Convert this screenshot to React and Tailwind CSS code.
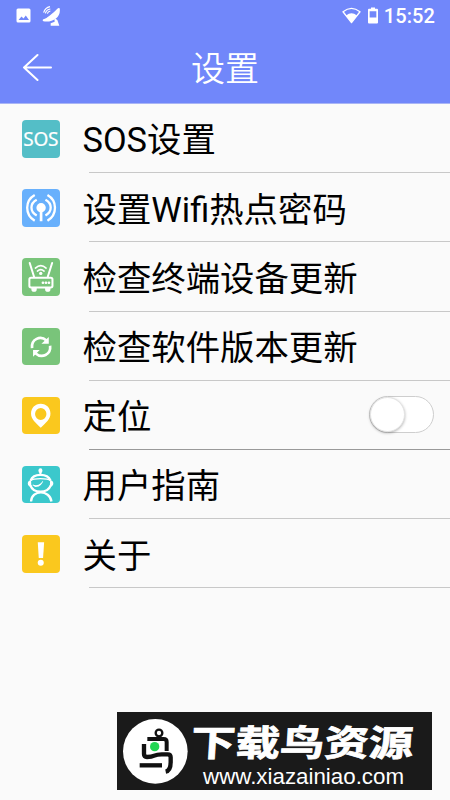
import React, { useState } from 'react';

const WifiSpotIcon = () => (
  <svg viewBox="0 0 112 112" className="h-full w-full" fill="none" stroke="#fff" strokeWidth="7">
    <circle cx="57" cy="56" r="14" fill="#fff" stroke="none" />
    <path d="M57 60V96" strokeWidth="8" />
    <path d="M44 79c-21-11-21-36 0-47M70 79c21-11 21-36 0-47" />
    <path d="M38 95C8 77 8 35 38 18M76 95c30-18 30-60 0-77" />
  </svg>
);

const RouterIcon = () => (
  <svg viewBox="0 0 112 112" className="h-full w-full" fill="none" stroke="#fff" strokeLinecap="round">
    <path d="M23 15l13 41M90 15L77 56" strokeWidth="6" />
    <rect x="22" y="59" width="69" height="29" rx="5" strokeWidth="6" />
    <path d="M30 90h12v3a6 6 0 0 1-12 0zM71 90h12v3a6 6 0 0 1-12 0z" fill="#fff" strokeWidth="4" />
    <path d="M40 30q16-14 32 0M46 39q10-9 20 0" strokeWidth="5" />
    <circle cx="56" cy="46" r="5" fill="#fff" stroke="none" />
    <path d="M62 74h1M71 74h1M80 74h1" strokeWidth="7" />
  </svg>
);

const RefreshIcon = () => (
  <svg viewBox="0 0 112 112" className="h-full w-full" fill="none" stroke="#fff" strokeWidth="8">
    <path d="M30 60C27 33 55 21 73 37" />
    <path d="M84 53C87 80 59 92 41 76" />
    <path d="M80 27v20H58zM33 86V66h20z" fill="#fff" stroke="none" />
  </svg>
);

const PinIcon = () => (
  <svg viewBox="0 0 112 112" className="h-full w-full">
    <path
      fillRule="evenodd"
      fill="#fff"
      d="M56 20c-17 0-29 13-29 29 0 18 14 27 29 43 15-16 29-25 29-43 0-16-12-29-29-29zm0 13a17 18 0 1 1 0 36 17 18 0 0 1 0-36z"
    />
  </svg>
);

const RobotIcon = () => (
  <svg viewBox="0 0 112 112" className="h-full w-full" fill="none" stroke="#fff" strokeWidth="6">
    <ellipse cx="55" cy="14" rx="6" ry="7" fill="#fff" stroke="none" />
    <path d="M55 16v14" />
    <path d="M26 43C34 21 76 21 85 43" strokeWidth="7" />
    <path d="M26 43c8-7 50-7 59 0" strokeWidth="4" />
    <path d="M27 42c-13 2-13 19 1 21zM84 42c13 2 13 19-1 21z" fill="#fff" stroke="none" />
    <path d="M25 58c9 25 51 25 61 0" strokeWidth="7" />
    <path d="M32 57c12 5 26 0 30-11M37 61c8 1 15-2 20-7" strokeWidth="3" />
    <path d="M27 106c2-36 56-36 61 0" strokeWidth="7" />
  </svg>
);

const AlertIcon = () => (
  <svg viewBox="0 0 112 112" className="h-full w-full" fill="#fff">
    <path d="M47 22h19l-3 47H50z" />
    <circle cx="56" cy="83" r="9" />
  </svg>
);

const SosIcon = () => (
  <span className="pt-px font-['Noto_Sans'] text-[19px] leading-none tracking-[-0.3px] text-white [-webkit-text-stroke:0.2px_white]">SOS</span>
);

const items = [
  { label: 'SOS设置', icon: SosIcon, bg: 'bg-[#54bec7]', line: 'border-[#c8c8c8]' },
  { label: '设置Wifi热点密码', icon: WifiSpotIcon, bg: 'bg-[#68b0fc]', line: 'border-[#c8c8c8]' },
  { label: '检查终端设备更新', icon: RouterIcon, bg: 'bg-[#79c47a]', line: 'border-[#c8c8c8]' },
  { label: '检查软件版本更新', icon: RefreshIcon, bg: 'bg-[#79c47a]', line: 'border-[#c8c8c8]' },
  { label: '定位', icon: PinIcon, bg: 'bg-[#fac81e]', line: 'border-[#999999]', toggle: true },
  { label: '用户指南', icon: RobotIcon, bg: 'bg-[#3bc8cc]', line: 'border-[#c8c8c8]' },
  { label: '关于', icon: AlertIcon, bg: 'bg-[#fac81e]', line: 'border-[#c8c8c8]' },
];

const StatusBar = () => (
  <div className="flex h-[31px] items-center text-white">
    <svg viewBox="0 0 15 15" className="ml-[16px] h-[15px] w-[15px]">
      <path
        fillRule="evenodd"
        fill="#fff"
        d="M2 .5h11q1.500 0 1.500 1.500v11q0 1.500-1.500 1.500H2Q.5 14.500.5 13V2Q.5.5 2 .5zM2.500 12h10.500L9.800 7.500 7.500 10.500 5.500 8.500z"
      />
    </svg>
    <svg viewBox="0 0 57 60" className="ml-[11px] h-[20px] w-[19px]" fill="#fff">
      <path d="M53 7C58 34 32 51 4 46q-4-3 0-6C16 36 30 24 46 8q4-4 7-1z" />
      <path d="M37 36l9 6 6 17H26v-7l12-5z" />
      <path d="M5 20Q9 5 24 2M10 22q3-11 15-13M16 23q2-7 9-8" fill="none" stroke="#fff" strokeWidth="3.5" />
    </svg>
    <svg viewBox="0 0 56 50" className="ml-auto h-[17px] w-[19px]">
      <path d="M3 14Q28-6 53 14L28 46z" fill="none" stroke="#fff" strokeWidth="4" strokeLinejoin="round" />
      <path d="M12 25q16-13 32 0L28 46z" fill="#fff" />
    </svg>
    <svg viewBox="0 0 30 50" className="ml-[7px] h-[17px] w-[10px]">
      <path
        fillRule="evenodd"
        fill="#fff"
        d="M9 1h12v4h6q3 0 3 3v38q0 3-3 3H3q-3 0-3-3V8q0-3 3-3h6zM5 12v19h20V12z"
      />
    </svg>
    <span className="mr-[15px] ml-[6px] text-[20px] leading-none font-medium tracking-[0.1px]">15:52</span>
  </div>
);

const Switch = ({ checked, onChange }) => (
  <button
    type="button"
    role="switch"
    aria-checked={checked}
    aria-label="定位"
    onClick={() => onChange(!checked)}
    className={`mr-[16px] ml-auto flex h-[37px] w-[65px] rounded-full border border-[#cecece] ${
      checked ? 'justify-end bg-[#7187fa]' : 'bg-white'
    }`}
  >
    <span className="h-[35px] w-[35px] rounded-full border border-[#e4e4e4] bg-white shadow-[0_1px_3px_rgba(0,0,0,0.3)]" />
  </button>
);

const Watermark = () => (
  <div className="mt-auto mr-[18px] mb-[10px] ml-auto flex h-[78px] w-[315px] items-center bg-[#1a1a1a] text-white">
    <svg viewBox="0 0 195 195" className="ml-[5.5px] h-[65px] w-[65px] shrink-0">
      <circle cx="97" cy="97" r="97" fill="#fff" />
      <g fill="none" stroke="#111">
        <circle cx="108" cy="42" r="10" strokeWidth="7" />
        <path d="M73 60h49q9 0 9 9v27" strokeWidth="12" />
        <path d="M63 75v30q0 9 9 9 14 0 22-4t22-4h18q9 0 9 9v14q0 26-15 29" strokeWidth="13" />
        <path d="M50 139h67" strokeWidth="13" />
      </g>
      <circle cx="95" cy="83" r="14" fill="#22d653" />
    </svg>
    <div className="relative h-full grow">
      <div className="absolute top-[14px] left-[3px] origin-left scale-x-[1.235] -skew-x-3 text-[36px] leading-[37px] font-bold whitespace-nowrap [-webkit-text-stroke:0.8px_white]">
        下载鸟资源
      </div>
      <div className="absolute top-[53px] left-[15.5px] origin-left scale-x-[1.015] font-['Liberation_Sans'] text-[22px] leading-[24px] whitespace-nowrap">
        www.xiazainiao.com
      </div>
    </div>
  </div>
);

const App = () => {
  const [located, setLocated] = useState(false);

  return (
    <div className="flex h-screen w-full flex-col overflow-hidden bg-[#fafafa] font-[Roboto,'Noto_Sans_CJK_SC',sans-serif] text-black">
      <header className="h-[104px] shrink-0 border-b border-[#a9b5f5] bg-[#7187fa]">
        <StatusBar />
        <div className="grid h-[72px] grid-cols-3 items-center">
          <svg viewBox="0 0 30 28" className="ml-[22px] h-[28px] w-[30px]" fill="none" stroke="#fff" strokeWidth="2" strokeLinecap="round" strokeLinejoin="round">
            <path d="M15.500 2L2 14.500 15.500 27M2 14.500h27" />
          </svg>
          <h1 className="pt-[3px] text-center text-[34px] leading-none font-[350] text-white">设置</h1>
        </div>
      </header>
      <ul className="shrink-0">
        {items.map(({ label, icon: Icon, bg, line, toggle }) => (
          <li key={label} className="flex h-[69.2px]">
            <div className={`mt-[16px] ml-[22px] flex h-[37.5px] w-[37.5px] shrink-0 items-center justify-center overflow-hidden rounded-[4px] ${bg}`}>
              <Icon />
            </div>
            <div className={`ml-[29.5px] flex grow items-center border-b ${line}`}>
              <span className="-ml-[6.5px] pt-[5px] text-[34.4px] leading-none whitespace-nowrap">{label}</span>
              {toggle && <Switch checked={located} onChange={setLocated} />}
            </div>
          </li>
        ))}
      </ul>
      <Watermark />
    </div>
  );
};

export default App;
